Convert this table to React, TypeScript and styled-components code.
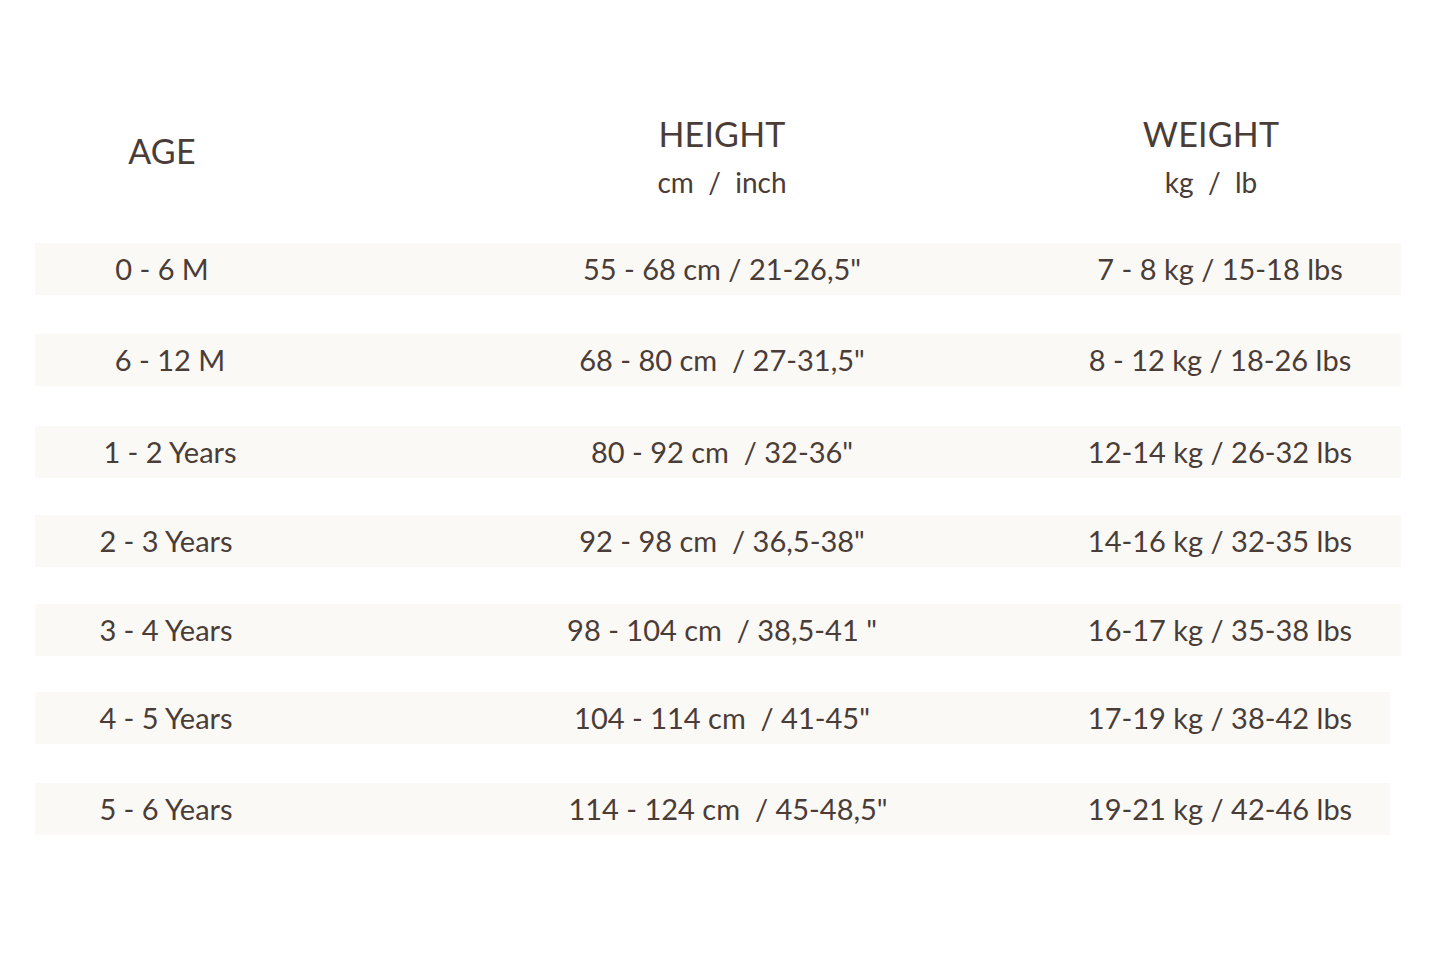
import styled, { createGlobalStyle } from "styled-components";

const GlobalStyle = createGlobalStyle`
  html, body {
    margin: 0;
    padding: 0;
    background: #ffffff;
  }
  body {
    font-family: Lato, "Noto Sans", "Liberation Sans", sans-serif;
    color: #4a3c37;
  }
`;

const Page = styled.div`
  width: 1440px;
  height: 960px;
  padding: 114px 0 0 35px;
  box-sizing: border-box;
`;

const Grid = styled.div`
  display: grid;
  grid-template-columns: 262px 850px 146px;
`;

const Header = styled(Grid)`
  align-items: start;
  margin-bottom: 41px;
`;

const HeadCell = styled.div<{ $top?: number; $shift?: number }>`
  display: flex;
  flex-direction: column;
  align-items: center;
  white-space: nowrap;
  margin-top: ${(p) => p.$top ?? 0}px;
  transform: translateX(${(p) => p.$shift ?? 0}px);
`;

const HeadTitle = styled.div`
  font-size: 34px;
  line-height: 40px;
  letter-spacing: 0.2px;
`;

const HeadUnit = styled.div`
  font-size: 28px;
  line-height: 40px;
  margin-top: 8px;
  white-space: pre;
`;

const Rows = styled.div`
  display: flex;
  flex-direction: column;
`;

const Row = styled(Grid)<{ $short?: boolean; $gap?: number }>`
  width: ${(p) => (p.$short ? 1355 : 1366)}px;
  height: 52px;
  margin-top: ${(p) => p.$gap ?? 0}px;
  align-items: center;
  background: #faf9f6;
`;

const Cell = styled.div<{ $shift?: number }>`
  display: flex;
  justify-content: center;
  white-space: pre;
  font-size: 29px;
  line-height: 52px;
  transform: translateX(${(p) => p.$shift ?? 0}px);
`;

type SizeRow = {
  age: string;
  height: string;
  weight: string;
  gap: number;
  ageShift?: number;
  heightShift?: number;
  short?: boolean;
};

const rows: SizeRow[] = [
  { age: "0 - 6 M", height: "55 - 68 cm / 21-26,5\"", weight: "7 - 8 kg / 15-18 lbs", gap: 0, ageShift: -4 },
  { age: "6 - 12 M", height: "68 - 80 cm  / 27-31,5\"", weight: "8 - 12 kg / 18-26 lbs", gap: 39, ageShift: 4 },
  { age: "1 - 2 Years", height: "80 - 92 cm  / 32-36\"", weight: "12-14 kg / 26-32 lbs", gap: 40, ageShift: 4 },
  { age: "2 - 3 Years", height: "92 - 98 cm  / 36,5-38\"", weight: "14-16 kg / 32-35 lbs", gap: 37 },
  { age: "3 - 4 Years", height: "98 - 104 cm  / 38,5-41 \"", weight: "16-17 kg / 35-38 lbs", gap: 37 },
  { age: "4 - 5 Years", height: "104 - 114 cm  / 41-45\"", weight: "17-19 kg / 38-42 lbs", gap: 36, short: true },
  { age: "5 - 6 Years", height: "114 - 124 cm  / 45-48,5\"", weight: "19-21 kg / 42-46 lbs", gap: 39, heightShift: 6, short: true },
];

export default function App() {
  return (
    <Page>
      <GlobalStyle />
      <Header>
        <HeadCell $top={17} $shift={-4}>
          <HeadTitle>AGE</HeadTitle>
        </HeadCell>
        <HeadCell>
          <HeadTitle>HEIGHT</HeadTitle>
          <HeadUnit>cm  /  inch</HeadUnit>
        </HeadCell>
        <HeadCell $shift={-9}>
          <HeadTitle>WEIGHT</HeadTitle>
          <HeadUnit>kg  /  lb</HeadUnit>
        </HeadCell>
      </Header>
      <Rows>
        {rows.map((r) => (
          <Row key={r.age} $short={r.short} $gap={r.gap}>
            <Cell $shift={r.ageShift}>{r.age}</Cell>
            <Cell $shift={r.heightShift}>{r.height}</Cell>
            <Cell>{r.weight}</Cell>
          </Row>
        ))}
      </Rows>
    </Page>
  );
}
